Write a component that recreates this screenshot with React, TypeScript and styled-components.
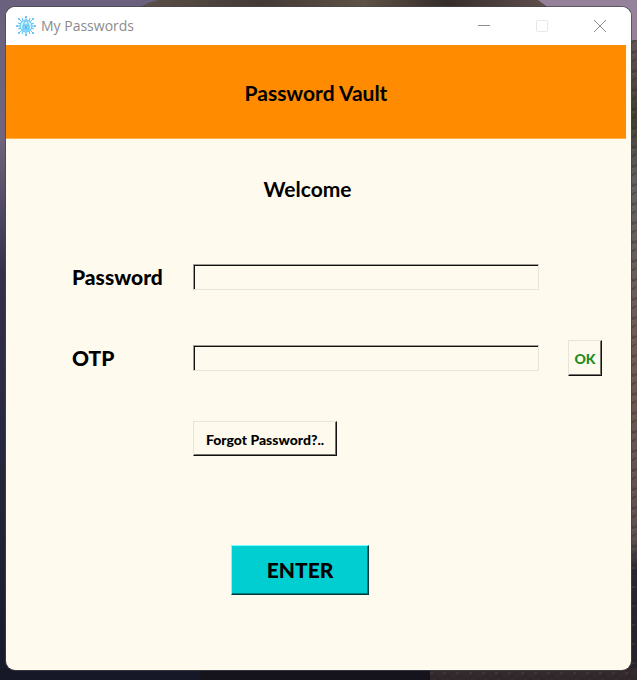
import React from "react";
import styled, { createGlobalStyle } from "styled-components";

const GlobalStyle = createGlobalStyle`
  * { box-sizing: border-box; }
  body { margin: 0; }
`;

const Desktop = styled.div`
  position: relative;
  display: flex;
  min-height: 100vh;
  padding: 7px 6px 10px;
  background: #171727;
`;

const Wallpaper = styled.svg`
  position: absolute;
  inset: 0;
  width: 100%;
  height: 100%;
`;

const Window = styled.main`
  position: relative;
  flex: 1;
  display: flex;
  flex-direction: column;
  border-radius: 9px;
  overflow: hidden;
  background: #fffaee;
  box-shadow: 0 0 0 1px rgba(70, 68, 76, 0.7);
  color: #000;
  font-family: "Comic Sans MS", Lato, sans-serif;
  font-weight: 900;
`;

const TitleBar = styled.header`
  display: flex;
  align-items: center;
  height: 38px;
  padding: 0 2px 0 10px;
  background: #fff;
`;

const WindowTitle = styled.span`
  flex: 1;
  margin-left: 5px;
  color: #8c8c8c;
  font: 400 14px/20px "Open Sans", sans-serif;
`;

const WindowButton = styled.button`
  display: flex;
  align-items: center;
  justify-content: center;
  width: 58px;
  height: 38px;
  padding: 0;
  border: 0;
  background: none;
  color: #8c8c8c;
  &:disabled { color: #e8e8e8; }
`;

const Banner = styled.div`
  display: flex;
  align-items: center;
  justify-content: center;
  height: 94px;
  margin-right: 5px;
  padding-top: 2px;
  border-bottom: 1px solid #ffb04a;
  background: #ff8c00;
`;

const Heading = styled.h1`
  margin: 0;
  font-size: 21px;
  line-height: 28px;
`;

const Welcome = styled.h2`
  margin: 36px 22px 0 0;
  font-size: 21px;
  line-height: 28px;
  text-align: center;
`;

const LoginForm = styled.form`
  display: flex;
  flex-direction: column;
`;

const Fields = styled.div`
  display: grid;
  grid-template-columns: 121px minmax(0, 1fr) 34px;
  grid-auto-rows: 36px;
  row-gap: 45px;
  align-items: center;
  margin: 56px 29px 0 66px;
`;

const Label = styled.label`
  grid-column: 1;
  font-size: 21px;
  line-height: 28px;
`;

const TextBox = styled.input`
  grid-column: 2;
  min-width: 0;
  height: 26px;
  margin-right: 29px;
  padding: 1px 4px;
  border: 1px solid;
  border-color: #9d9a92 #e8e4d9 #e8e4d9 #9d9a92;
  border-radius: 0;
  outline: 0;
  background: #fffaee;
  box-shadow: inset 1px 1px #111;
  font: inherit;
  font-size: 14px;
`;

const RaisedButton = styled.button`
  border: 1px solid;
  border-color: #e8e4d9 #111 #111 #e8e4d9;
  border-radius: 0;
  background: #fffaee;
  box-shadow: inset -1px -1px #77746e;
  color: #000;
  font: inherit;
  font-size: 14px;
  line-height: 20px;
  white-space: nowrap;
`;

const OkButton = styled(RaisedButton)`
  width: 34px;
  height: 36px;
  padding: 2px 0 0;
  color: #228b22;
`;

const ForgotButton = styled(RaisedButton)`
  grid-column: 2;
  align-self: start;
  justify-self: start;
  width: 144px;
  height: 35px;
  padding: 2px 0 0;
`;

const EnterButton = styled(RaisedButton)`
  align-self: center;
  width: 138px;
  height: 50px;
  margin: 88px 37px 0 0;
  border-color: #72ffff #003b3c #003b3c #72ffff;
  background: #00ced1;
  box-shadow: inset -1px -1px #007b7d;
  font-size: 21px;
  line-height: 28px;
`;

function DesktopScenery() {
  return (
    <Wallpaper viewBox="0 0 637 680" preserveAspectRatio="none" aria-hidden="true">
      <defs>
        <linearGradient id="left" x1="0" y1="0" x2="0" y2="1">
          <stop offset="0" stopColor="#69617d" />
          <stop offset="0.2" stopColor="#71657d" />
          <stop offset="0.4" stopColor="#34314a" />
          <stop offset="1" stopColor="#171a2b" />
        </linearGradient>
        <linearGradient id="right" x1="0" y1="0" x2="0" y2="1">
          <stop offset="0" stopColor="#5f5557" />
          <stop offset="0.12" stopColor="#403e30" />
          <stop offset="0.22" stopColor="#626062" />
          <stop offset="0.5" stopColor="#6d5b52" />
          <stop offset="0.78" stopColor="#5c5050" />
          <stop offset="0.83" stopColor="#2b2630" />
          <stop offset="1" stopColor="#282229" />
        </linearGradient>
        <linearGradient id="ridge" x1="0" y1="0" x2="1" y2="0">
          <stop offset="0" stopColor="#5b5148" />
          <stop offset="0.3" stopColor="#443a36" />
          <stop offset="0.55" stopColor="#5e5245" />
          <stop offset="0.75" stopColor="#352d2a" />
          <stop offset="1" stopColor="#60504e" />
        </linearGradient>
        <pattern id="rock" width="13" height="19" patternUnits="userSpaceOnUse">
          <path d="M0 3l4-2 3 4 5-3M1 14l5-4 3 5 4-2" fill="none" stroke="#221d22" strokeWidth="2" />
          <path d="M1 8h3M8 17h3" stroke="#8c7970" />
        </pattern>
      </defs>
      <path d="M0 0H637V680H0z" fill="url(#left)" />
      <path d="M530 0H637V41H620V8H530z" fill="#93829a" />
      <path d="M138 8L148 3L158 0H538L549 8z" fill="url(#ridge)" />
      <path d="M625 40H637V680H625z" fill="url(#right)" />
      <path d="M625 40H637V680H625z" fill="url(#rock)" opacity="0.3" />
      <path d="M0 668H350V680H0z" fill="#171827" />
      <path d="M200 668H637V680H200z" fill="#15141c" />
      <path d="M430 668H637V680H430z" fill="#332a2e" />
      <path d="M430 668H637V680H430z" fill="url(#rock)" opacity="0.3" />
    </Wallpaper>
  );
}

function VaultIcon() {
  return (
    <svg width="20" height="20" viewBox="0 0 20 20" fill="none" aria-hidden="true">
      <g stroke="#5cc4f5" strokeWidth="1">
        <path d="M10 4V1M10 19v-3M4 10H1M19 10h-3M6 6L3 3M14 6l3-3M6 14l-3 3M14 14l3 3M7 5L6 2M13 5l1-3M5 8L2 7M15 8l3-1M5 12l-3 1M15 12l3 1M7 15l-1 3M13 15l1 3" />
        <circle cx="10" cy="10" r="6" fill="#c9f0ff" />
        <path d="M8 9V7a2 2 0 014 0v2" />
        <path d="M7 9h6v5H7z" fill="#8ad6fb" />
        <path d="M10 10v3" stroke="#2a9fec" />
      </g>
      <g fill="#52b9f4">
        <circle cx="10" cy="1" r="1" /><circle cx="10" cy="19" r="1" />
        <circle cx="1" cy="10" r="1" /><circle cx="19" cy="10" r="1" />
        <circle cx="3" cy="3" r="1" /><circle cx="17" cy="3" r="1" />
        <circle cx="3" cy="17" r="1" /><circle cx="17" cy="17" r="1" />
      </g>
    </svg>
  );
}

export default function App() {
  return (
    <Desktop>
      <GlobalStyle />
      <DesktopScenery />
      <Window>
        <TitleBar>
          <VaultIcon />
          <WindowTitle>My Passwords</WindowTitle>
          <WindowButton type="button" aria-label="Minimize">
            <svg width="12" height="12" viewBox="0 0 12 12" stroke="currentColor"><path d="M0 5.5h12" /></svg>
          </WindowButton>
          <WindowButton type="button" aria-label="Maximize" disabled>
            <svg width="12" height="12" viewBox="0 0 12 12" fill="none" stroke="currentColor"><rect x=".5" y=".5" width="11" height="11" rx="1" /></svg>
          </WindowButton>
          <WindowButton type="button" aria-label="Close">
            <svg width="12" height="12" viewBox="0 0 12 12" stroke="currentColor"><path d="M0 0l12 12M12 0L0 12" /></svg>
          </WindowButton>
        </TitleBar>
        <Banner><Heading>Password Vault</Heading></Banner>
        <Welcome>Welcome</Welcome>
        <LoginForm onSubmit={(event: React.FormEvent) => event.preventDefault()}>
          <Fields>
            <Label htmlFor="password">Password</Label>
            <TextBox id="password" type="password" />
            <Label htmlFor="otp">OTP</Label>
            <TextBox id="otp" type="text" autoComplete="one-time-code" />
            <OkButton type="button">OK</OkButton>
            <ForgotButton type="button">Forgot Password?..</ForgotButton>
          </Fields>
          <EnterButton type="submit">ENTER</EnterButton>
        </LoginForm>
      </Window>
    </Desktop>
  );
}
